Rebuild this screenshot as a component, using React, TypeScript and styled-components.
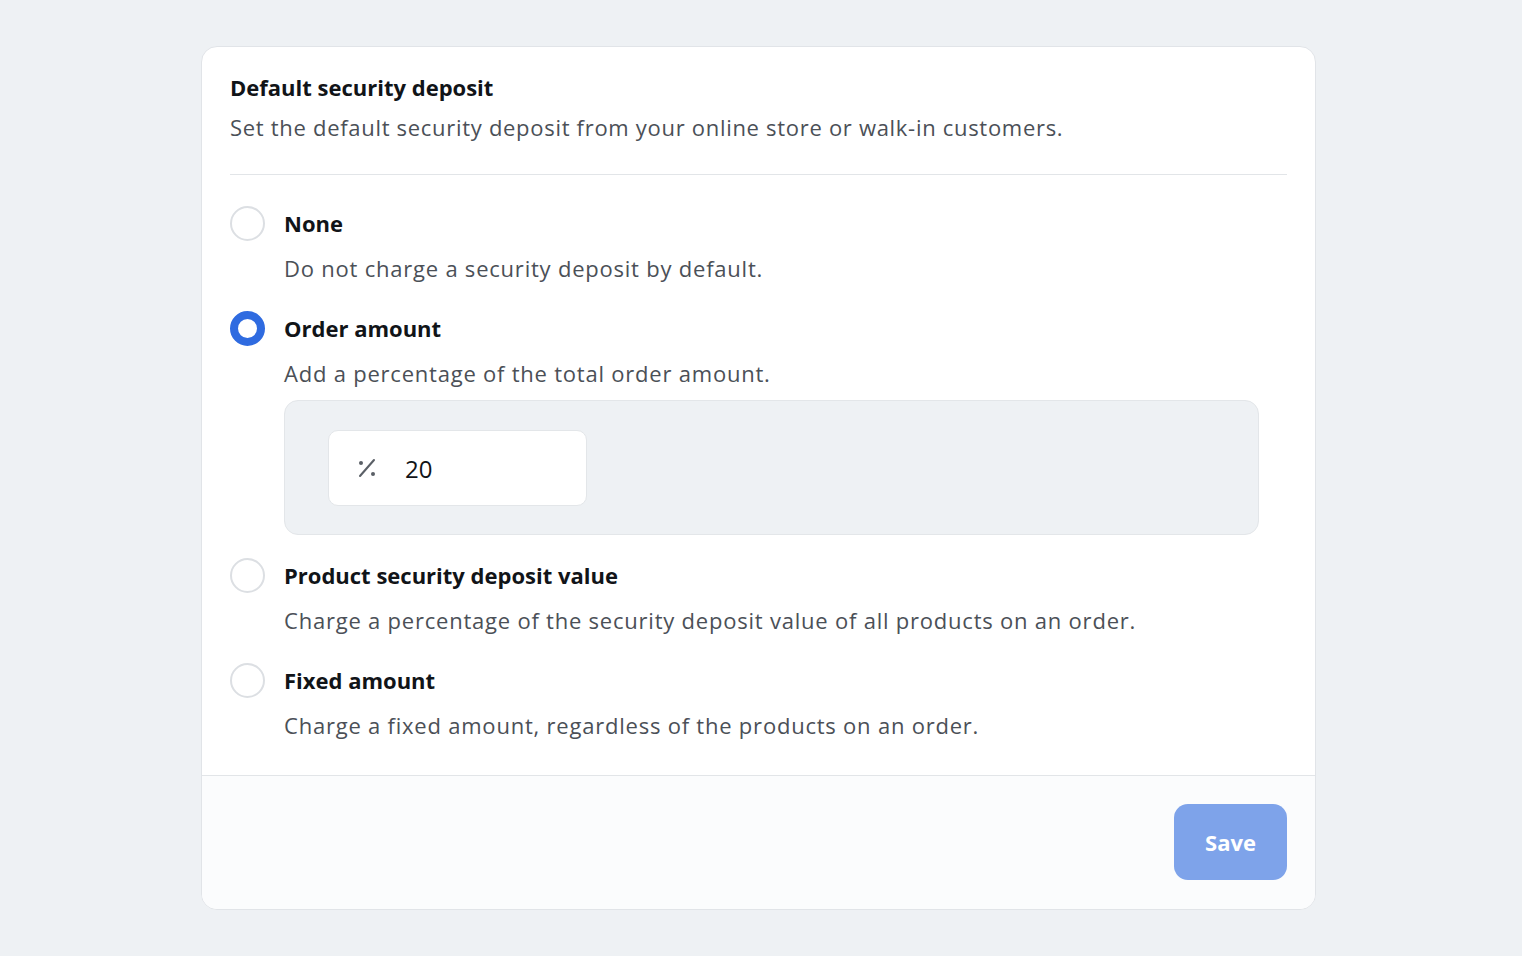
import React, { useState } from 'react';
import styled, { createGlobalStyle } from 'styled-components';

const GlobalStyle = createGlobalStyle`
    * { box-sizing: border-box; }
    html, body {
        margin: 0;
        padding: 0;
        background: #eef1f4;
        font-family: "Open Sans", "Lato", sans-serif;
        color: #111418;
    }
`

const Page = styled.div`
    min-height: 956px;
    padding: 46px 0 0 201px;
`

const Card = styled.div`
    width: 1115px;
    height: 864px;
    background: #ffffff;
    border: 1px solid #e1e4e8;
    border-radius: 16px;
    display: flex;
    flex-direction: column;
    overflow: hidden;
`

const Body = styled.div`
    padding: 25px 28px 0 28px;
    flex: 1;
`

const Title = styled.h2`
    margin: 0;
    font-size: 22px;
    font-weight: 700;
    line-height: 30px;
`

const Subtitle = styled.p`
    margin: 10px 0 0;
    font-size: 22px;
    letter-spacing: 0.7px;
    line-height: 30px;
    color: #4b5057;
`

const Divider = styled.div`
    height: 1px;
    background: #e2e5e8;
    margin-top: 32px;
`

const Options = styled.div`
    padding-top: 31px;
    display: flex;
    flex-direction: column;
    gap: 28px;
`

const Option = styled.div`
    display: grid;
    grid-template-columns: 54px 1fr;
    row-gap: 12px;
`

const Radio = styled.button<{ $checked: boolean }>`
    width: 35px;
    height: 35px;
    border-radius: 50%;
    padding: 0;
    background: #ffffff;
    cursor: pointer;
    border: ${p => (p.$checked ? '8px solid #2f6be0' : '2px solid #dcdfe3')};
`

const Label = styled.span`
    font-size: 22px;
    font-weight: 700;
    line-height: 35px;
`

const Description = styled.span`
    grid-column: 2;
    font-size: 22px;
    letter-spacing: 0.78px;
    line-height: 30px;
    color: #4b5057;
`

const Extra = styled.div`
    grid-column: 2;
    margin-right: 28px;
    margin-bottom: -5px;
    height: 135px;
    background: #eef1f4;
    border: 1px solid #e3e6e9;
    border-radius: 14px;
    padding: 29px 43px;
`

const InputBox = styled.label`
    width: 259px;
    height: 76px;
    background: #ffffff;
    border: 1px solid #e3e6e9;
    border-radius: 10px;
    display: flex;
    align-items: center;
    padding-left: 27px;
    gap: 27px;
`

const Input = styled.input`
    border: none;
    outline: none;
    width: 150px;
    font-family: inherit;
    font-size: 24px;
    color: #111418;
    background: transparent;
    padding: 0;
`

const Footer = styled.div`
    border-top: 1px solid #e2e5e8;
    background: #fbfcfd;
    height: 134px;
    display: flex;
    justify-content: flex-end;
    align-items: flex-start;
    padding: 28px 28px 0 0;
`

const SaveButton = styled.button`
    width: 113px;
    height: 76px;
    border: none;
    border-radius: 14px;
    background: #7ea3ea;
    color: #ffffff;
    font-family: inherit;
    font-size: 22px;
    font-weight: 700;
    cursor: pointer;
`

const PercentIcon = () => (
    <svg width="22" height="22" viewBox="0 0 22 22" fill="none">
        <line x1="4" y1="19" x2="18" y2="3" stroke="#5a5f66" strokeWidth="2" strokeLinecap="round" />
        <circle cx="5" cy="6" r="2" fill="#5a5f66" />
        <circle cx="17" cy="17" r="2" fill="#5a5f66" />
    </svg>
)

const options = [
    { id: 'none', label: 'None', description: 'Do not charge a security deposit by default.' },
    { id: 'order', label: 'Order amount', description: 'Add a percentage of the total order amount.' },
    { id: 'product', label: 'Product security deposit value', description: 'Charge a percentage of the security deposit value of all products on an order.' },
    { id: 'fixed', label: 'Fixed amount', description: 'Charge a fixed amount, regardless of the products on an order.' },
]

export default function App() {
    const [selected, setSelected] = useState('order')
    const [percent, setPercent] = useState('20')

    return (
        <>
            <GlobalStyle />
            <Page>
                <Card>
                    <Body>
                        <Title>Default security deposit</Title>
                        <Subtitle>Set the default security deposit from your online store or walk-in customers.</Subtitle>
                        <Divider />
                        <Options>
                            {options.map((option) => (
                                <Option key={option.id}>
                                    <Radio
                                        $checked={selected === option.id}
                                        aria-label={option.label}
                                        onClick={() => setSelected(option.id)}
                                    />
                                    <Label>{option.label}</Label>
                                    <Description>{option.description}</Description>
                                    {option.id === 'order' && selected === 'order' && (
                                        <Extra>
                                            <InputBox>
                                                <PercentIcon />
                                                <Input
                                                    value={percent}
                                                    onChange={(event) => setPercent(event.target.value)}
                                                />
                                            </InputBox>
                                        </Extra>
                                    )}
                                </Option>
                            ))}
                        </Options>
                    </Body>
                    <Footer>
                        <SaveButton>Save</SaveButton>
                    </Footer>
                </Card>
            </Page>
        </>
    )
}
